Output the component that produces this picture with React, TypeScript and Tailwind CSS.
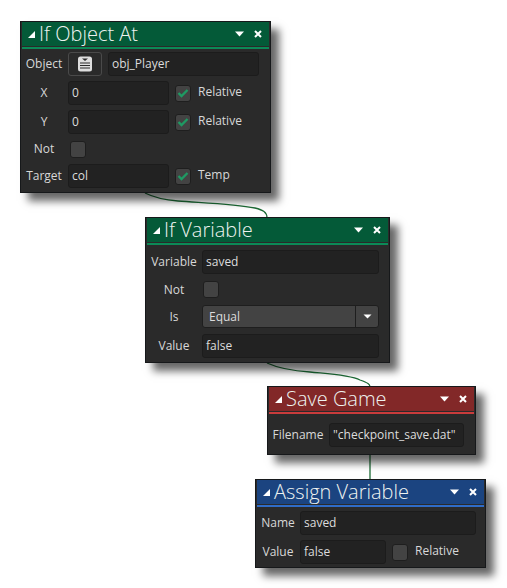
const font = { fontFamily: '"Open Sans", "Noto Sans", sans-serif' };

function Field({ text, className }: { text: string; className: string }) {
  return (
    <div className={`h-6 shrink-0 rounded-[3px] bg-[#222222] border border-[#1c1c1c] pl-[3px] flex items-center text-[12px] text-[#dcdcdc] leading-none ${className}`}>
      {text}
    </div>
  );
}

function Check({ on }: { on?: boolean }) {
  return (
    <div className="w-4 h-[17px] shrink-0 rounded-[3px] bg-[#434343] border border-[#1e1e1e] flex items-center justify-center">
      {on && (
        <svg width="12" height="10" viewBox="0 0 12 10">
          <path d="M1.5 5 L4.5 8 L10.5 2" fill="none" stroke="#1f9a63" strokeWidth="2.4" />
        </svg>
      )}
    </div>
  );
}

function Label({ text, className }: { text: string; className: string }) {
  return <div className={`shrink-0 text-center text-[12px] text-[#d8d8d8] leading-none ${className}`}>{text}</div>;
}

function Cap({ text }: { text: string }) {
  return <div className="text-[12px] text-[#d8d8d8] leading-none -mt-[2px]">{text}</div>;
}

function Node({
  box,
  head,
  line,
  title,
  children,
}: {
  box: string;
  head: string;
  line: string;
  title: string;
  children: React.ReactNode;
}) {
  return (
    <div className={`absolute bg-[#2a2a2a] border border-[#16181a] shadow-[8px_8px_8px_rgba(0,0,0,0.6)] px-px ${box}`}>
      <div className={`h-6 flex items-center pl-[5px] pr-[7px] ${head}`}>
        <svg width="9" height="9" viewBox="0 0 9 9" className="shrink-0">
          <path d="M8 1 V8 H1 Z" fill="#ffffff" />
        </svg>
        <div className="ml-[3px] text-[20px] font-light leading-none text-[#eef3f0] whitespace-nowrap -mt-px">{title}</div>
        <svg width="11" height="6" viewBox="0 0 11 6" className="ml-auto shrink-0">
          <path d="M1 0.5 H10 L5.5 5.5 Z" fill="#ffffff" />
        </svg>
        <svg width="8" height="8" viewBox="0 0 8 8" className="ml-[9px] shrink-0">
          <path d="M1 1 L7 7 M7 1 L1 7" stroke="#ffffff" strokeWidth="2" />
        </svg>
      </div>
      <div className={`mt-[1px] h-[2px] ${line}`} />
      {children}
    </div>
  );
}

export default function App() {
  return (
    <div className="relative w-[507px] h-[588px] bg-white overflow-hidden" style={font}>
      <svg width="507" height="588" viewBox="0 0 507 588" className="absolute left-0 top-0">
        <g fill="none" stroke="#1c6b35" strokeWidth="1.3">
          <path d="M145 193 C155 198 165 200 178 201 C205 203 235 204 255 208 C263 210 267 212 267 218" />
          <path d="M267 363 C280 369 295 371 310 372 C330 374 350 375 360 380 C368 383 370 384 370 387" />
          <path d="M370 455 V480" />
        </g>
      </svg>

      <Node box="left-[20px] top-[21px] w-[251px] h-[172px]" head="bg-[#045a38]" line="bg-[#0b8a57]" title="If Object At">
        <div className="mt-[3px] flex flex-col gap-[5px] pl-[2px]">
          <div className="flex items-center">
            <Label text="Object" className="w-10" />
            <div className="ml-1 w-[34px] h-6 shrink-0 rounded-[3px] border border-[#4a4a4a] bg-[#2a2a2a] flex items-center justify-center">
              <svg width="16" height="16" viewBox="0 0 16 16">
                <rect x="1" y="0.5" width="14" height="15" rx="2.5" fill="#dedede" />
                <path d="M5 2.5 H11 L8 5 Z" fill="#2a2a2a" />
                <path d="M3 7 H13 M3 9.5 H13 M3 12 H13" stroke="#2a2a2a" strokeWidth="1" />
              </svg>
            </div>
            <Field text="obj_Player" className="ml-[6px] w-[151px]" />
          </div>
          <div className="flex items-center">
            <Label text="X" className="w-10" />
            <Field text="0" className="ml-1 w-[101px]" />
            <div className="ml-[6px] mr-[7px]"><Check on /></div>
            <Cap text="Relative" />
          </div>
          <div className="flex items-center">
            <Label text="Y" className="w-10" />
            <Field text="0" className="ml-1 w-[101px]" />
            <div className="ml-[6px] mr-[7px]"><Check on /></div>
            <Cap text="Relative" />
          </div>
          <div className="flex items-center h-5">
            <Label text="Not" className="w-10" />
            <div className="ml-[6px]"><Check /></div>
          </div>
          <div className="flex items-center">
            <Label text="Target" className="w-10" />
            <Field text="col" className="ml-1 w-[101px]" />
            <div className="ml-[6px] mr-[7px]"><Check on /></div>
            <Cap text="Temp" />
          </div>
        </div>
      </Node>

      <Node box="left-[145px] top-[217px] w-[245px] h-[146px]" head="bg-[#045a38]" line="bg-[#0b8a57]" title="If Variable">
        <div className="mt-[5px] flex flex-col gap-[6px] pl-[3px]">
          <div className="flex items-center">
            <Label text="Variable" className="w-[48px]" />
            <Field text="saved" className="ml-[4px] w-[177px]" />
          </div>
          <div className="flex items-center h-[19px]">
            <Label text="Not" className="w-[48px]" />
            <div className="ml-[5px]"><Check /></div>
          </div>
          <div className="flex items-center">
            <Label text="Is" className="w-[48px]" />
            <div className="ml-[4px] w-[177px] h-[23px] flex rounded-[3px] bg-[#434343] border border-[#1e1e1e] text-[12px] text-[#dcdcdc] leading-none">
              <div className="flex-1 flex items-center pl-[6px]">Equal</div>
              <div className="w-[23px] border-l border-[#1e1e1e] flex items-center justify-center">
                <svg width="9" height="5" viewBox="0 0 9 5">
                  <path d="M0.5 0.5 H8.5 L4.5 4.5 Z" fill="#ffffff" />
                </svg>
              </div>
            </div>
          </div>
          <div className="flex items-center">
            <Label text="Value" className="w-[48px]" />
            <Field text="false" className="ml-[4px] w-[177px]" />
          </div>
        </div>
      </Node>

      <Node box="left-[267px] top-[386px] w-[209px] h-[69px]" head="bg-[#822828]" line="bg-[#c93c3c]" title="Save Game">
        <div className="mt-[9px] flex items-center pl-[3px]">
          <Label text="Filename" className="w-[52px]" />
          <Field text={'"checkpoint_save.dat"'} className="ml-[5px] w-[135px]" />
        </div>
      </Node>

      <Node box="left-[255px] top-[479px] w-[231px] h-[89px]" head="bg-[#1b4480]" line="bg-[#2f6cc8]" title="Assign Variable">
        <div className="mt-[4px] flex flex-col gap-[5px] pl-[3px]">
          <div className="flex items-center">
            <Label text="Name" className="w-[36px]" />
            <Field text="saved" className="ml-[4px] w-[176px]" />
          </div>
          <div className="flex items-center">
            <Label text="Value" className="w-[36px]" />
            <Field text="false" className="ml-[4px] w-[86px]" />
            <div className="ml-[6px] mr-[7px]"><Check /></div>
            <Cap text="Relative" />
          </div>
        </div>
      </Node>
    </div>
  );
}
